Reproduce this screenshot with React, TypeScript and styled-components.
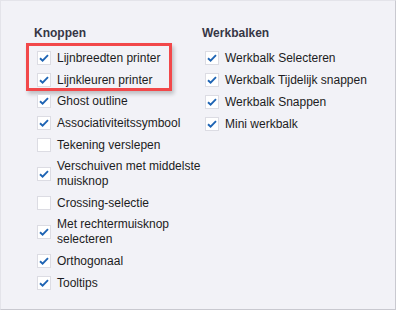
import styled, { createGlobalStyle } from 'styled-components';

const GlobalStyle = createGlobalStyle`
  html, body {
    margin: 0;
    padding: 0;
    background: #f2f2f7;
  }
  body {
    font-family: "Liberation Sans", Arial, sans-serif;
  }
`;

interface Option {
  label: string;
  checked: boolean;
}

const knoppen: Option[] = [
  { label: 'Lijnbreedten printer', checked: true },
  { label: 'Lijnkleuren printer', checked: true },
  { label: 'Ghost outline', checked: true },
  { label: 'Associativiteitssymbool', checked: true },
  { label: 'Tekening verslepen', checked: false },
  { label: 'Verschuiven met middelste muisknop', checked: true },
  { label: 'Crossing-selectie', checked: false },
  { label: 'Met rechtermuisknop selecteren', checked: true },
  { label: 'Orthogonaal', checked: true },
  { label: 'Tooltips', checked: true },
];

const werkbalken: Option[] = [
  { label: 'Werkbalk Selecteren', checked: true },
  { label: 'Werkbalk Tijdelijk snappen', checked: true },
  { label: 'Werkbalk Snappen', checked: true },
  { label: 'Mini werkbalk', checked: true },
];

function CheckRow({ label, checked, wrapAt = 152 }: Option & { wrapAt?: number }) {
  return (
    <Row>
      <Box>
        {checked && (
          <svg width="10" height="8" viewBox="0 0 10 8">
            <path d="M1 4.2 L3.6 6.6 L9 1.2" fill="none" stroke="#1e64b4" strokeWidth="1.9" />
          </svg>
        )}
      </Box>
      <Label $wrapAt={wrapAt}>{label}</Label>
    </Row>
  );
}

export default function App() {
  return (
    <>
      <GlobalStyle />
      <Panel>
        <Column $width={168}>
          <Heading>Knoppen</Heading>
          <List>
            <Highlight>
              <CheckRow {...knoppen[0]} />
              <CheckRow {...knoppen[1]} />
            </Highlight>
            {knoppen.slice(2).map(o => (
              <CheckRow key={o.label} {...o} />
            ))}
          </List>
        </Column>
        <Column $width={190}>
          <Heading>Werkbalken</Heading>
          <List>
            {werkbalken.map(o => (
              <CheckRow key={o.label} {...o} wrapAt={200} />
            ))}
          </List>
        </Column>
      </Panel>
    </>
  );
}

const Panel = styled.div`
  box-sizing: border-box;
  width: 396px;
  height: 310px;
  display: flex;
  padding: 24px 0 0 33px;
  background: #f2f2f7;
  border-top: 1px solid #e4e4ea;
  border-left: 1px solid #e4e4ea;
  border-right: 1px solid #c9c9d0;
  border-bottom: 1px solid #c9c9d0;
`;

const Column = styled.div<{ $width: number }>`
  width: ${p => p.$width}px;
  flex: none;
  display: flex;
  flex-direction: column;
`;

const Heading = styled.div`
  font-weight: 700;
  font-size: 12px;
  line-height: 16px;
  color: #363645;
  margin-bottom: 9px;
`;

const List = styled.div`
  display: flex;
  flex-direction: column;
  gap: 6px;
`;

const Highlight = styled.div`
  box-sizing: border-box;
  display: flex;
  flex-direction: column;
  gap: 6px;
  margin: -7px 0 -4px -8px;
  padding: 4px 0 0 5px;
  width: 146px;
  border: 3px solid #f2484a;
  box-shadow: 2px 3px 4px rgba(0, 0, 0, 0.22);
`;

const Row = styled.div`
  display: flex;
  align-items: center;
  gap: 6px;
  min-height: 16px;
  margin-left: 3px;
`;

const Box = styled.div`
  box-sizing: border-box;
  flex: none;
  width: 14px;
  height: 14px;
  background: #ffffff;
  border: 1px solid #dcdce3;
  display: flex;
  align-items: center;
  justify-content: center;
`;

const Label = styled.span<{ $wrapAt: number }>`
  flex: none;
  font-size: 12px;
  line-height: 15px;
  color: #1c1c22;
  max-width: ${p => p.$wrapAt}px;
  white-space: normal;
`;
